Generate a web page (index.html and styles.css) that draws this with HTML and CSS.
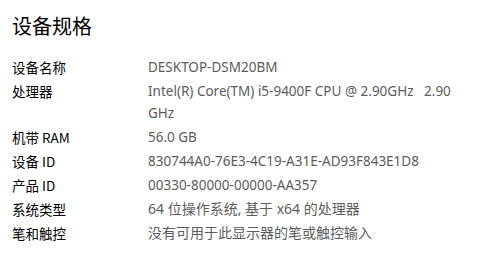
FILE: index.html
```html
<!DOCTYPE html>
<html lang="zh-CN">
<head>
<meta charset="utf-8">
<link rel="stylesheet" href="styles.css">
</head>
<body>
<main class="panel">
  <h1 class="title">设备规格</h1>
  <dl class="specs">
    <div class="row"><dt>设备名称</dt><dd>DESKTOP-DSM20BM</dd></div>
    <div class="row"><dt>处理器</dt><dd>Intel(R) Core(TM) i5-9400F CPU @ 2.90GHz&nbsp;&nbsp; 2.90 GHz</dd></div>
    <div class="row"><dt>机带 RAM</dt><dd>56.0 GB</dd></div>
    <div class="row"><dt>设备 ID</dt><dd>830744A0-76E3-4C19-A31E-AD93F843E1D8</dd></div>
    <div class="row"><dt>产品 ID</dt><dd>00330-80000-00000-AA357</dd></div>
    <div class="row"><dt>系统类型</dt><dd class="zh">64 位操作系统, 基于 x64 的处理器</dd></div>
    <div class="row"><dt>笔和触控</dt><dd class="zh">没有可用于此显示器的笔或触控输入</dd></div>
  </dl>
</main>
</body>
</html>
```

FILE: styles.css
```css
html, body {
  margin: 0;
  padding: 0;
  background: #ffffff;
}

.panel {
  padding: 10px 0 0 12px;
  font-family: "Noto Sans", "Noto Sans CJK SC", sans-serif;
}

.title {
  margin: 0 0 14px 0;
  font-family: "Noto Sans CJK SC", sans-serif;
  font-size: 20px;
  font-weight: 400;
  line-height: 32px;
  color: #000000;
}

.specs {
  margin: 0;
  display: flex;
  flex-direction: column;
  gap: 2px;
}

.row {
  display: flex;
  font-size: 13.5px;
  line-height: 22px;
}

.row dt {
  width: 136px;
  flex: none;
  font-family: "Noto Sans CJK SC", sans-serif;
  color: #000000;
}

.row dd {
  margin: 0;
  width: 320px;
  color: #5c5c5c;
  font-family: "Noto Sans", "Noto Sans CJK SC", sans-serif;
}

.row dd.zh {
  font-size: 14px;
}
```
